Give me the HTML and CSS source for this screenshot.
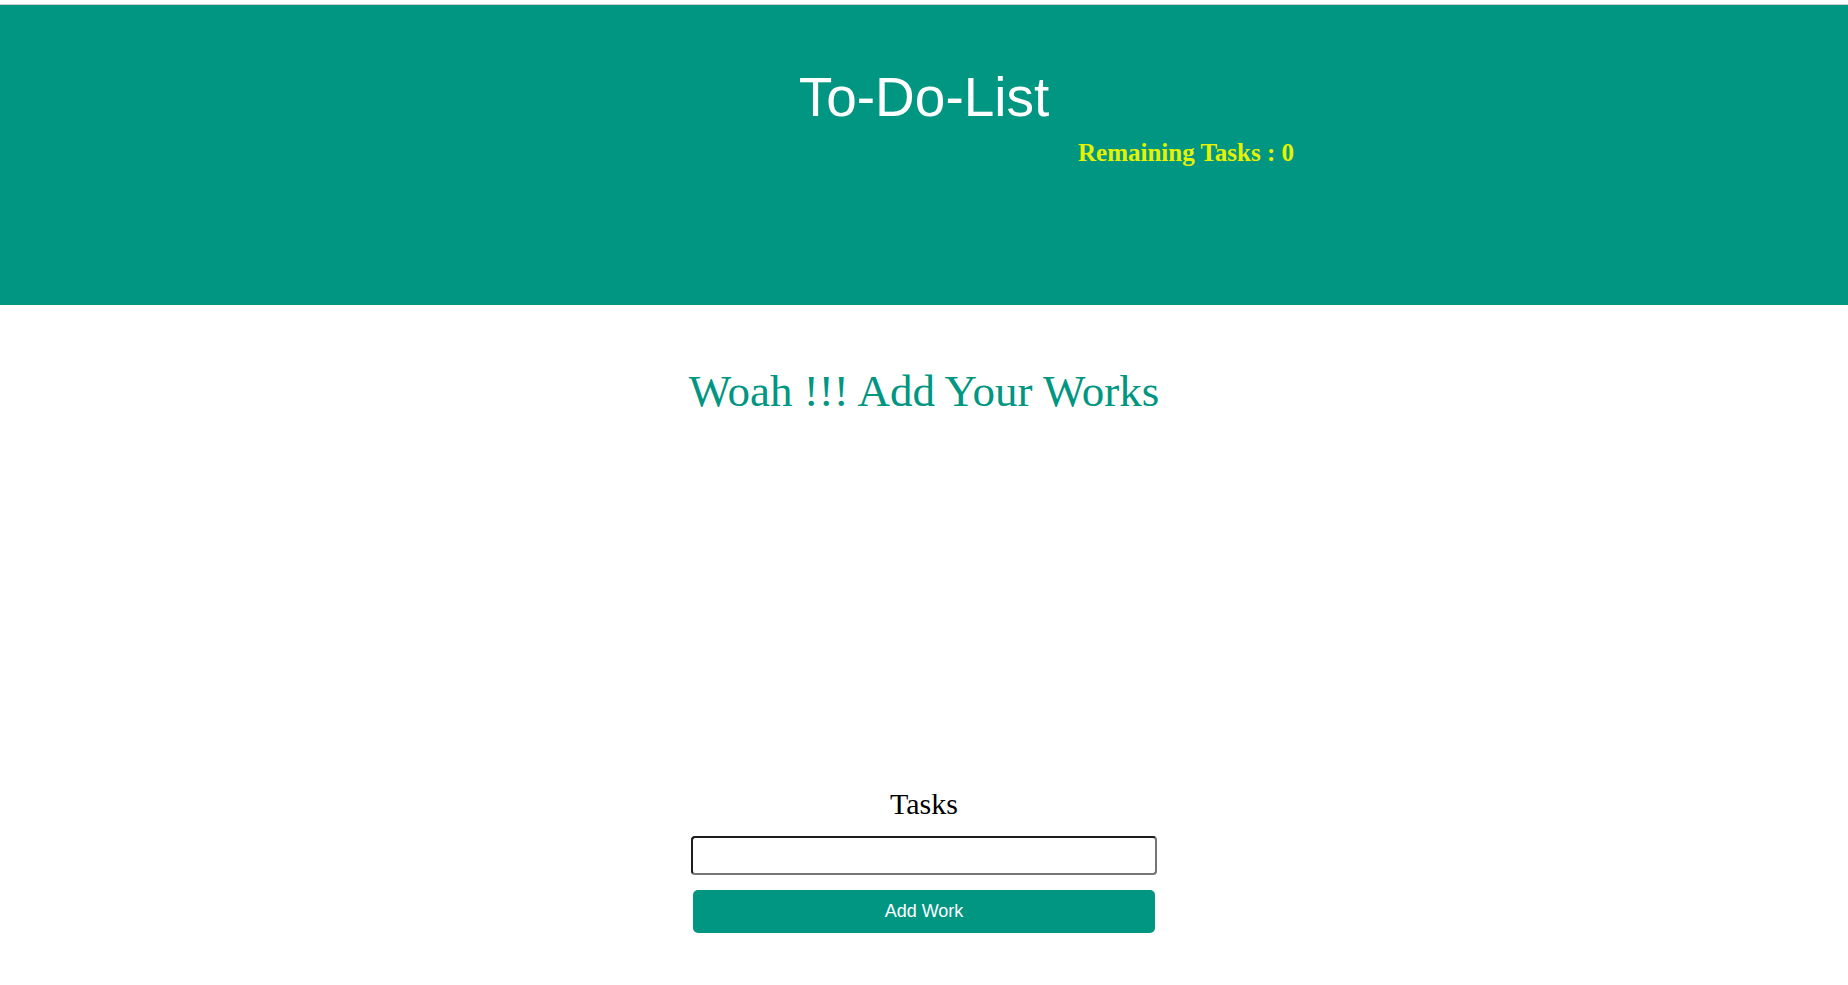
FILE: index.html
```html
<!DOCTYPE html>
<html lang="en">
<head>
<meta charset="utf-8">
<title>To-Do-List</title>
<link rel="stylesheet" href="styles.css">
</head>
<body>
  <header class="header">
    <h1 class="title">To-Do-List</h1>
    <div class="remaining">Remaining Tasks : 0</div>
  </header>
  <main class="main">
    <h2 class="empty-msg">Woah !!! Add Your Works</h2>
    <ul class="task-list"></ul>
    <form class="add-form">
      <label class="form-label" for="task">Tasks</label>
      <input class="task-input" id="task" type="text">
      <button class="add-btn" type="button">Add Work</button>
    </form>
  </main>
</body>
</html>
```

FILE: styles.css
```css
html, body {
  margin: 0;
  padding: 0;
  background: #ffffff;
}

body {
  font-family: "Liberation Serif", "Times New Roman", serif;
  padding-top: 4px;
}

.header {
  box-sizing: border-box;
  height: 301px;
  border-top: 1px solid #cfcfcf;
  background: #009682;
  padding-top: 61px;
}

.title {
  margin: 0;
  font-family: "Liberation Sans", Arial, sans-serif;
  font-weight: normal;
  font-size: 55px;
  line-height: 63px;
  color: #ffffff;
  text-align: center;
}

.remaining {
  margin: 9px 0 0 58.333%;
  font-family: "Liberation Serif", "Times New Roman", serif;
  font-weight: bold;
  font-size: 25px;
  line-height: 29px;
  color: #e6f200;
}

.main {
  display: flex;
  flex-direction: column;
  align-items: center;
}

.empty-msg {
  margin: 61px 0 0;
  font-weight: normal;
  font-size: 45px;
  line-height: 51px;
  color: #009682;
  text-align: center;
}

.task-list {
  margin: 0;
  padding: 0;
  height: 370px;
  list-style: none;
}

.add-form {
  display: flex;
  flex-direction: column;
  align-items: center;
}

.form-label {
  font-size: 30px;
  line-height: 34px;
  color: #000000;
}

.task-input {
  box-sizing: border-box;
  margin: 15px 0 0;
  width: 466px;
  height: 39px;
  padding: 1px 4px;
  border-width: 2px;
  border-style: solid;
  border-color: #1c1c1c #767676 #767676 #1c1c1c;
  border-radius: 4px;
  background: #ffffff;
  font-size: 16px;
  outline: none;
}

.add-btn {
  box-sizing: border-box;
  margin: 15px 0 0;
  width: 462px;
  height: 43px;
  border: none;
  border-radius: 5px;
  background: #009682;
  color: #ffffff;
  font-family: "Liberation Sans", Arial, sans-serif;
  font-size: 18px;
  cursor: pointer;
}
```
